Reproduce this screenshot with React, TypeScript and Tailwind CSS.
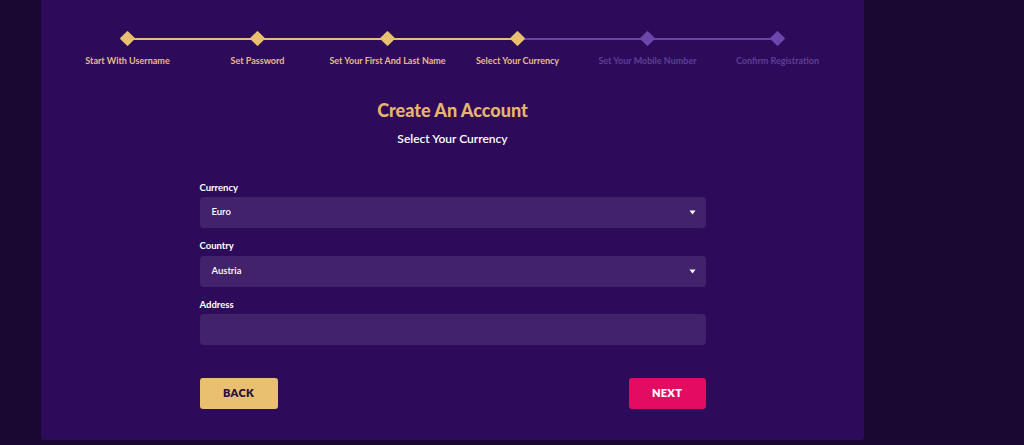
import React from "react";

const steps = [
  { label: "Start With Username", done: true },
  { label: "Set Password", done: true },
  { label: "Set Your First And Last Name", done: true },
  { label: "Select Your Currency", done: true },
  { label: "Set Your Mobile Number", done: false },
  { label: "Confirm Registration", done: false },
];

function Caret() {
  return (
    <svg width="7" height="5" viewBox="0 0 7 5" className="shrink-0">
      <path d="M0.5 0.5 L6.5 0.5 L3.5 4.5 Z" fill="#ffffff" />
    </svg>
  );
}

function Field({ label, value, select }: { label: string; value?: string; select?: boolean }) {
  return (
    <div className="flex flex-col">
      <label className="text-[9.5px] font-bold text-white leading-none mb-[5px]">{label}</label>
      <div className="h-[31px] rounded-[4px] bg-[#43226c] flex items-center justify-between pl-[12px] pr-[10px]">
        <span className="text-[9.5px] font-semibold text-white">{value}</span>
        {select && <Caret />}
      </div>
    </div>
  );
}

export default function App() {
  return (
    <div
      className="w-[1024px] h-[445px] bg-[#1a0832] overflow-hidden"
      style={{ fontFamily: "Lato, 'Noto Sans', sans-serif" }}
    >
      <div className="ml-[41px] w-[823px] h-[440px] bg-[#2d0b5a] rounded-b-[3px] flex flex-col items-center">
        {/* Stepper */}
        <div className="relative w-[780px] mt-[31px] grid grid-cols-6">
          <div className="absolute top-[7px] left-[65px] w-[390px] h-[2px] bg-[#e6bf7f]" />
          <div className="absolute top-[7px] left-[455px] w-[260px] h-[2px] bg-[#6b43a8]" />
          {steps.map((s) => (
            <div key={s.label} className="relative flex flex-col items-center">
              <div
                className={`w-[11px] h-[11px] mt-[2px] rotate-45 rounded-[1px] ${
                  s.done ? "bg-[#e8c070]" : "bg-[#6c46ab]"
                }`}
              />
              <span
                className={`mt-[10px] text-[9px] font-bold whitespace-nowrap ${
                  s.done ? "text-[#e9bb84]" : "text-[#5e3f96]"
                }`}
              >
                {s.label}
              </span>
            </div>
          ))}
        </div>

        {/* Heading */}
        <h1 className="mt-[33px] text-[18px] font-black text-[#e8b56c] leading-none">Create An Account</h1>
        <p className="mt-[14px] text-[12px] font-semibold text-white leading-none">Select Your Currency</p>

        {/* Form */}
        <div className="w-[506px] mt-[38px] flex flex-col gap-[13px]">
          <Field label="Currency" value="Euro" select />
          <Field label="Country" value="Austria" select />
          <Field label="Address" />
        </div>

        <div className="w-[506px] mt-[33px] flex justify-between">
          <button className="w-[78px] h-[31px] rounded-[3px] bg-[#e8c070] text-[#2d0b3a] text-[11px] font-extrabold tracking-wide">
            BACK
          </button>
          <button className="w-[77px] h-[31px] rounded-[3px] bg-[#e30c62] text-white text-[11px] font-extrabold tracking-wide">
            NEXT
          </button>
        </div>
      </div>
    </div>
  );
}
